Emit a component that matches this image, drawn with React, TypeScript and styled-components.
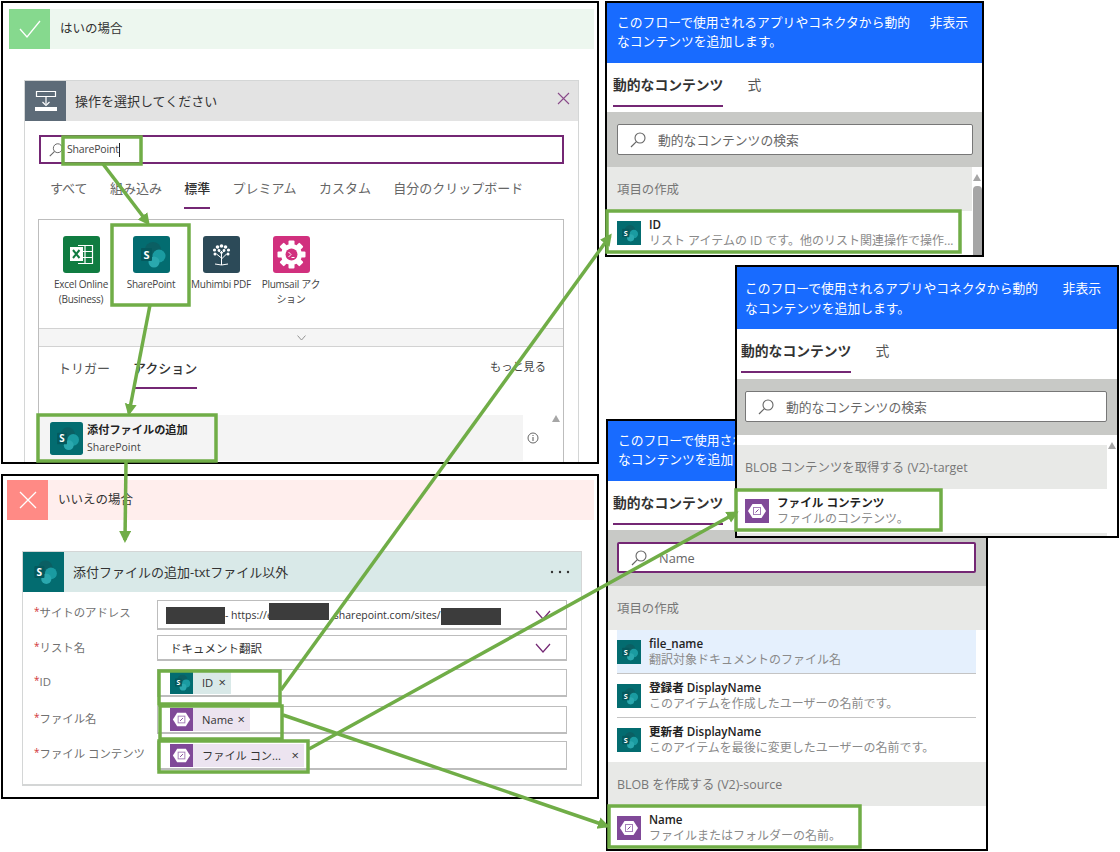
import React from "react";
import styled, { createGlobalStyle } from "styled-components";

const Global = createGlobalStyle`
  html, body { margin: 0; padding: 0; background: #fff; }
  body { font-family: "Open Sans", "Noto Sans CJK JP", sans-serif; color: #333; }
  * { box-sizing: border-box; }
`;

const Canvas = styled.main`
  position: relative;
  width: 1120px;
  height: 852px;
  overflow: hidden;
  background: #fff;
`;

/* ---------- free-canvas windows ---------- */
const FlowWindow = styled.section<{ $top: number; $height: number; $pad: number }>`
  position: absolute;
  left: 1px;
  top: ${(p) => p.$top}px;
  width: 598px;
  height: ${(p) => p.$height}px;
  border: 2px solid #000;
  background: #fff;
  overflow: hidden;
  padding: ${(p) => p.$pad}px 3px 0 ${(p) => p.$pad}px;
`;

const Band = styled.div<{ $bg: string }>`
  display: flex;
  align-items: center;
  height: 40px;
  background: ${(p) => p.$bg};
  font-size: 12.5px;
  color: #333;
`;

const BandIcon = styled.div<{ $bg: string }>`
  width: 41px;
  height: 40px;
  background: ${(p) => p.$bg};
  margin-right: 10px;
  display: flex;
  align-items: center;
  justify-content: center;
`;

const BandLabel = styled.span`
  padding-bottom: 3px;
`;

const Card = styled.div<{ $left: number; $top: number; $width: number; $height: number }>`
  margin: ${(p) => p.$top}px 0 0 ${(p) => p.$left}px;
  width: ${(p) => p.$width}px;
  height: ${(p) => p.$height}px;
  border: 1px solid #d4d6d6;
  border-bottom-width: 2px;
  background: #fff;
`;

const CardHead = styled.div<{ $bg: string }>`
  display: flex;
  align-items: center;
  height: 40px;
  background: ${(p) => p.$bg};
  font-size: 13px;
  color: #333;
  padding-right: 8px;
`;

const CardHeadIcon = styled.div<{ $bg: string }>`
  width: 41px;
  height: 40px;
  background: ${(p) => p.$bg};
  display: flex;
  align-items: center;
  justify-content: center;
  margin-right: 9px;
`;

const CardTitle = styled.span`
  flex: 1;
  padding-bottom: 2px;
`;

const OpSearch = styled.div`
  display: flex;
  align-items: center;
  gap: 3px;
  margin: 14px 0 0 14px;
  width: 525px;
  height: 29px;
  padding-left: 7px;
  border: 2px solid #742774;
  font-size: 10.5px;
  letter-spacing: -0.2px;
  color: #444;
`;

const Caret = styled.span`
  display: inline-block;
  width: 1px;
  height: 14px;
  background: #222;
  vertical-align: middle;
`;

const TabRow = styled.div`
  display: flex;
  gap: 22.3px;
  height: 55px;
  padding: 14px 0 0 25px;
`;

const OpTab = styled.div<{ $active?: boolean }>`
  height: 31px;
  font-size: 13px;
  line-height: 20px;
  color: ${(p) => (p.$active ? "#333" : "#666")};
  font-weight: ${(p) => (p.$active ? 500 : 400)};
  border-bottom: ${(p) => (p.$active ? "2px solid #742774" : "none")};
`;

const OpBox = styled.div`
  margin-left: 13px;
  width: 526px;
  height: 260px;
  border: 1px solid #bdbdbd;
`;

const Tiles = styled.div`
  display: flex;
  height: 108px;
  padding: 16px 0 0 7px;
`;

const Tile = styled.div`
  width: 70px;
  display: flex;
  flex-direction: column;
  align-items: center;
  font-size: 10px;
  line-height: 15px;
  color: #444;
  text-align: center;
`;

const TileLabel = styled.div`
  margin-top: 4px;
  width: 70px;
  white-space: pre-line;
  letter-spacing: -0.25px;
`;

const CollapseRow = styled.div`
  height: 19px;
  background: #f5f5f5;
  border-top: 1px solid #d2d2d2;
  border-bottom: 1px solid #d2d2d2;
  display: flex;
  align-items: center;
  justify-content: center;
`;

const ActionTabs = styled.div`
  display: flex;
  gap: 23px;
  height: 68px;
  padding: 11px 17px 0 19px;
`;

const ActionTab = styled.div<{ $active?: boolean }>`
  height: 31px;
  font-size: 13px;
  line-height: 20px;
  color: ${(p) => (p.$active ? "#333" : "#555")};
  font-weight: ${(p) => (p.$active ? 500 : 400)};
  border-bottom: ${(p) => (p.$active ? "2px solid #742774" : "none")};
`;

const MoreLink = styled.div`
  margin-left: auto;
  font-size: 11.2px;
  line-height: 18px;
  color: #444;
`;

const ActionBody = styled.div`
  display: flex;
`;

const ActionRow = styled.div`
  display: flex;
  flex: none;
  align-items: center;
  gap: 4px;
  width: 484px;
  height: 46px;
  padding-left: 11px;
  background: #f4f4f4;
`;

const ActionText = styled.div`
  display: flex;
  flex-direction: column;
  gap: 1px;
`;

const ActionTitle = styled.div`
  font-size: 11.2px;
  line-height: 16px;
  font-weight: 700;
  color: #222;
`;

const ActionSub = styled.div`
  font-size: 10.5px;
  line-height: 16px;
  color: #444;
`;

const InfoSlot = styled.div`
  width: 20px;
  display: flex;
  align-items: center;
  justify-content: center;
`;

const ScrollUp = styled.div<{ $ml: number; $mt: number }>`
  flex: none;
  width: 0;
  height: 0;
  margin: ${(p) => p.$mt}px 0 0 ${(p) => p.$ml}px;
  border-left: 4px solid transparent;
  border-right: 4px solid transparent;
  border-bottom: 7px solid #a6a6a6;
`;

/* ---------- form ---------- */
const Form = styled.div`
  padding: 8px 14px 0 11px;
`;

const Field = styled.div<{ $gap: number }>`
  display: flex;
  margin-bottom: ${(p) => p.$gap}px;
`;

const FieldLabel = styled.div`
  width: 123px;
  font-size: 11.4px;
  line-height: 18px;
  padding-top: 2px;
  color: #707070;
  white-space: nowrap;
`;

const Star = styled.span`
  color: #d13438;
  font-size: 10px;
  vertical-align: 2px;
`;

const FieldInput = styled.div<{ $height: number }>`
  flex: 1;
  height: ${(p) => p.$height}px;
  border: 1px solid #bdbdbd;
  border-bottom-width: 2px;
  display: flex;
  align-items: center;
  position: relative;
  font-size: 11.5px;
  color: #333;
  padding-left: 12px;
`;

const Chevron = styled.span`
  position: absolute;
  right: 15px;
  top: 50%;
  transform: translateY(-50%);
  display: flex;
`;

const UrlText = styled.span`
  font-size: 10.5px;
  white-space: nowrap;
  display: flex;
  align-items: center;
  margin-left: -4px;
`;

const Redact = styled.span<{ $w: number; $shift: number; $gapL?: number; $gapR?: number }>`
  display: inline-block;
  width: ${(p) => p.$w}px;
  height: 17px;
  background: #3c3c3c;
  transform: translateY(${(p) => p.$shift}px);
  margin-left: ${(p) => p.$gapL || 0}px;
  margin-right: ${(p) => p.$gapR || 0}px;
`;

const Chip = styled.div<{ $bg: string; $w: number }>`
  display: flex;
  align-items: center;
  width: ${(p) => p.$w}px;
  height: 23px;
  background: ${(p) => p.$bg};
  font-size: 11.2px;
  color: #333;
  white-space: nowrap;
`;

const ChipText = styled.span`
  margin-left: 9px;
  flex: 1;
`;

const ChipClose = styled.span`
  font-size: 13px;
  line-height: 1;
  margin-right: 5px;
  color: #333;
`;

/* ---------- dynamic content panels ---------- */
const Panel = styled.section<{ $left: number; $top: number; $w: number; $h: number; $z: number }>`
  position: absolute;
  left: ${(p) => p.$left}px;
  top: ${(p) => p.$top}px;
  width: ${(p) => p.$w}px;
  height: ${(p) => p.$h}px;
  z-index: ${(p) => p.$z};
  border: 2px solid #000;
  background: #fff;
  overflow: hidden;
`;

const PanelHead = styled.header<{ $wide?: boolean }>`
  display: flex;
  justify-content: space-between;
  height: ${(p) => (p.$wide ? 62 : 60)}px;
  padding: ${(p) => (p.$wide ? "11px 16px 0 8px" : "10px 14px 0 10px")};
  background: #186bff;
  color: #fff;
  font-size: 12.8px;
  line-height: ${(p) => (p.$wide ? 20 : 19)}px;
`;

const PanelHeadText = styled.div`
  width: 300px;
  flex: none;
`;

const PanelTabs = styled.div<{ $left: number; $h?: number }>`
  display: flex;
  gap: 24px;
  height: ${(p) => p.$h ?? 49}px;
  padding: 11px 0 0 ${(p) => p.$left}px;
`;

const PanelTab = styled.div<{ $active?: boolean }>`
  height: 33px;
  font-size: 13.8px;
  line-height: 22px;
  font-weight: ${(p) => (p.$active ? 600 : 400)};
  color: ${(p) => (p.$active ? "#333" : "#555")};
  border-bottom: ${(p) => (p.$active ? "2px solid #742774" : "none")};
`;

const SearchBand = styled.div<{ $left: number; $right: number; $h?: number }>`
  height: ${(p) => p.$h ?? 55}px;
  background: #c8c9c6;
  padding: 12px ${(p) => p.$right}px 12px ${(p) => p.$left}px;
`;

const ContentSearch = styled.div<{ $focus?: boolean }>`
  display: flex;
  align-items: center;
  gap: 11px;
  height: 31px;
  padding-left: 11px;
  background: #fff;
  border: ${(p) => (p.$focus ? "2px solid #742774" : "1px solid #777")};
  border-radius: 2px;
  font-size: 12.8px;
  color: #666;
`;

const ListBody = styled.div`
  display: flex;
`;

const ListMain = styled.div`
  flex: 1;
  min-width: 0;
`;

const ScrollCol = styled.div`
  width: 10px;
  display: flex;
  flex-direction: column;
  align-items: center;
`;

const ScrollThumb = styled.div`
  width: 9px;
  height: 70px;
  margin-top: 5px;
  background: #a6a6a6;
  border-radius: 4px 4px 0 0;
`;

const Section = styled.div<{ $mt?: number; $left?: number }>`
  display: flex;
  align-items: center;
  height: 44px;
  margin-top: ${(p) => p.$mt || 0}px;
  padding-left: ${(p) => p.$left ?? 10}px;
  background: #e8e9e7;
  font-size: 12.4px;
  color: #777;
`;

const Item = styled.div<{ $hi?: boolean; $line?: boolean; $left?: number }>`
  display: flex;
  align-items: center;
  gap: 8px;
  height: 44px;
  margin-left: ${(p) => p.$left ?? 10}px;
  margin-right: 10px;
  background: ${(p) => (p.$hi ? "#e5f0fd" : "#fff")};
  border-bottom: ${(p) => (p.$line ? "1px solid #c4c4c4" : "none")};
  white-space: nowrap;
  overflow: hidden;
`;

const ItemText = styled.div`
  min-width: 0;
  flex: 1;
`;

const ItemTitle = styled.div`
  font-size: 11.6px;
  line-height: 15px;
  font-weight: 600;
  color: #222;
`;

const ItemDesc = styled.div`
  font-size: 12px;
  line-height: 17px;
  color: #8a8a8a;
`;

const Overlay = styled.svg`
  position: absolute;
  inset: 0;
  z-index: 20;
  pointer-events: none;
`;

/* ---------- icons ---------- */
const SharePointIcon = ({ size = 37, square }: { size?: number; square?: boolean }) => (
  <svg width={size} height={size} viewBox="0 0 37 37" style={{ flex: "none" }}>
    <rect width="37" height="37" rx={square ? 0 : 3} fill="#036c70" />
    <circle cx="20" cy="14" r="8" fill="#0b5f63" />
    <circle cx="26" cy="20" r="6.5" fill="#1a9ba1" />
    <circle cx="21" cy="26" r="5.5" fill="#2aa8ae" />
    <rect x="8" y="12" width="11" height="13" rx="1" fill="#05595d" />
    <text x="13.5" y="22.5" fontSize="11" fontWeight="700" fill="#fff" textAnchor="middle" fontFamily="Open Sans, sans-serif">S</text>
  </svg>
);

const ExcelIcon = () => (
  <svg width="37" height="37" viewBox="0 0 37 37" style={{ flex: "none" }}>
    <rect width="37" height="37" rx="3" fill="#107c41" />
    <path d="M15 9.5h14.5v18H15M22 9.5v18M15 15.5h14.5M15 21.5h14.5" fill="none" stroke="#fff" strokeWidth="1.2" />
    <rect x="7" y="11" width="13" height="14" fill="#fff" />
    <path d="M10 14l6.5 8M16.5 14L10 22" stroke="#107c41" strokeWidth="2" />
  </svg>
);

const MuhimbiIcon = () => (
  <svg width="37" height="37" viewBox="0 0 37 37" style={{ flex: "none" }}>
    <rect width="37" height="37" rx="3" fill="#2c4a58" />
    <g fill="none" stroke="#fff" strokeWidth="1">
      <path d="M18.5 29V15M18.5 22l-5-4M18.5 23l5-5M18.5 18l-3-4M18.5 18l3-4M12 28q6.500 2 13 0" />
    </g>
    <g fill="#fff">
      <circle cx="18.500" cy="10" r="1.800" /><circle cx="14.500" cy="11" r="1.800" /><circle cx="22.500" cy="11" r="1.800" />
      <circle cx="11.500" cy="14" r="1.600" /><circle cx="25.500" cy="14" r="1.600" /><circle cx="12" cy="18" r="1.500" />
      <circle cx="25" cy="18" r="1.500" /><circle cx="16" cy="14.500" r="1.400" /><circle cx="21" cy="14.500" r="1.400" />
    </g>
  </svg>
);

const PlumsailIcon = () => (
  <svg width="37" height="37" viewBox="0 0 37 37" style={{ flex: "none" }}>
    <rect width="37" height="37" rx="3" fill="#d1307e" />
    <g fill="#fff">
      {[0, 45, 90, 135, 180, 225, 270, 315].map((a) => (
        <rect key={a} x="15.500" y="4.500" width="6" height="7" rx="1" transform={`rotate(${a} 18.500 18.500)`} />
      ))}
      <circle cx="18.500" cy="18.500" r="10.500" />
    </g>
    <circle cx="18.500" cy="18.500" r="6" fill="#d1307e" />
    <path d="M15.500 16l2.500 2.500-2.500 2.500M18.500 21.500h3" fill="none" stroke="#fff" strokeWidth="1" />
  </svg>
);

const BlobIcon = ({ size = 24 }: { size?: number }) => (
  <svg width={size} height={size} viewBox="0 0 24 24" style={{ flex: "none" }}>
    <rect width="24" height="24" fill="#804998" />
    <path d="M7.500 5h9l4.500 7-4.500 7h-9L3 12z" fill="#fff" />
    <rect x="8.500" y="8.500" width="7" height="7" fill="#fff" stroke="#a47fb8" strokeWidth="1" />
    <path d="M10.500 13.500l3-3" stroke="#804998" strokeWidth="1" />
  </svg>
);

const SearchGlyph = ({ size = 18, color = "#666" }: { size?: number; color?: string }) => (
  <svg width={size} height={size} viewBox="0 0 18 18" style={{ flex: "none" }}>
    <circle cx="11" cy="7" r="5" fill="none" stroke={color} strokeWidth="1.100" />
    <path d="M7.400 10.600L2 16" stroke={color} strokeWidth="1.200" />
  </svg>
);

const ChevronGlyph = ({ size = 16, color = "#742774", w = 1.200 }: { size?: number; color?: string; w?: number }) => (
  <svg width={size} height={size * 0.625} viewBox="0 0 16 10">
    <path d="M1 1l7 8 7-8" fill="none" stroke={color} strokeWidth={w} />
  </svg>
);

const GREEN = "#70ad47";

const Box = ({ x, y, w, h }: { x: number; y: number; w: number; h: number }) => (
  <rect x={x} y={y} width={w} height={h} fill="none" stroke={GREEN} strokeWidth="3.500" />
);

const Arrow = ({ d }: { d: [number, number, number, number] }) => (
  <line x1={d[0]} y1={d[1]} x2={d[2]} y2={d[3]} stroke={GREEN} strokeWidth="3.500" markerEnd="url(#head)" />
);

const PanelHeader = ({ wide }: { wide?: boolean }) => (
  <PanelHead $wide={wide}>
    <PanelHeadText>このフローで使用されるアプリやコネクタから動的なコンテンツを追加します。</PanelHeadText>
    <span>非表示</span>
  </PanelHead>
);

const App = () => (
  <Canvas>
    <Global />

    <FlowWindow $top={1} $height={463} $pad={6}>
      <Band $bg="#edf7ef">
        <BandIcon $bg="#86d98e">
          <svg width="24" height="20" viewBox="0 0 24 20">
            <path d="M2 10l7 8L22 2" fill="none" stroke="#fff" strokeWidth="1.300" />
          </svg>
        </BandIcon>
        <BandLabel>はいの場合</BandLabel>
      </Band>
      <Card $left={15} $top={31} $width={555} $height={400}>
        <CardHead $bg="#e3e3e3">
          <CardHeadIcon $bg="#5d6b78">
            <svg width="24" height="24" viewBox="0 0 24 24">
              <path d="M2.500 2.500h19v5h-19zM12 7.500V15" fill="none" stroke="#fff" strokeWidth="1.200" />
              <path d="M8.500 13l3.500 3.500 3.500-3.500" fill="none" stroke="#fff" strokeWidth="1.200" />
              <rect x="1" y="18" width="22" height="4" fill="#fff" />
            </svg>
          </CardHeadIcon>
          <CardTitle>操作を選択してください</CardTitle>
          <svg width="13" height="13" viewBox="0 0 13 13" style={{ marginBottom: 6 }}>
            <path d="M1 1l11 11M12 1L1 12" stroke="#8a4a8a" strokeWidth="1.100" />
          </svg>
        </CardHead>
        <OpSearch>
          <SearchGlyph size={16} />
          <span>SharePoint<Caret /></span>
        </OpSearch>
        <TabRow>
          <OpTab>すべて</OpTab>
          <OpTab>組み込み</OpTab>
          <OpTab $active>標準</OpTab>
          <OpTab>プレミアム</OpTab>
          <OpTab>カスタム</OpTab>
          <OpTab>自分のクリップボード</OpTab>
        </TabRow>
        <OpBox>
          <Tiles>
            <Tile><ExcelIcon /><TileLabel>{"Excel Online\n(Business)"}</TileLabel></Tile>
            <Tile><SharePointIcon /><TileLabel>SharePoint</TileLabel></Tile>
            <Tile><MuhimbiIcon /><TileLabel>Muhimbi PDF</TileLabel></Tile>
            <Tile><PlumsailIcon /><TileLabel>{"Plumsail アク\nション"}</TileLabel></Tile>
          </Tiles>
          <CollapseRow><ChevronGlyph size={9} color="#888" w={1.600} /></CollapseRow>
          <ActionTabs>
            <ActionTab>トリガー</ActionTab>
            <ActionTab $active>アクション</ActionTab>
            <MoreLink>もっと見る</MoreLink>
          </ActionTabs>
          <ActionBody>
            <ActionRow>
              <SharePointIcon size={33} />
              <ActionText>
                <ActionTitle>添付ファイルの追加</ActionTitle>
                <ActionSub>SharePoint</ActionSub>
              </ActionText>
            </ActionRow>
            <InfoSlot>
              <svg width="12" height="12" viewBox="0 0 12 12">
                <circle cx="6" cy="6" r="5" fill="none" stroke="#555" strokeWidth="0.900" />
                <path d="M6 5v4M6 3v1" stroke="#555" strokeWidth="1" />
              </svg>
            </InfoSlot>
            <ScrollUp $ml={9} $mt={0} />
          </ActionBody>
        </OpBox>
      </Card>
    </FlowWindow>

    <FlowWindow $top={474} $height={325} $pad={4}>
      <Band $bg="#ffeeed">
        <BandIcon $bg="#ff8a85">
          <svg width="18" height="18" viewBox="0 0 18 18">
            <path d="M1 1l16 16M17 1L1 17" stroke="#fff" strokeWidth="1.300" />
          </svg>
        </BandIcon>
        <BandLabel>いいえの場合</BandLabel>
      </Band>
      <Card $left={15} $top={31} $width={560} $height={235}>
        <CardHead $bg="#d9e9e8">
          <CardHeadIcon $bg="#036c70"><SharePointIcon size={34} square /></CardHeadIcon>
          <CardTitle>添付ファイルの追加-txtファイル以外</CardTitle>
          <svg width="20" height="4" viewBox="0 0 20 4" style={{ marginRight: 3 }}>
            <circle cx="2" cy="2" r="1.200" fill="#333" /><circle cx="10" cy="2" r="1.200" fill="#333" /><circle cx="18" cy="2" r="1.200" fill="#333" />
          </svg>
        </CardHead>
        <Form>
          <Field $gap={5}>
            <FieldLabel><Star>*</Star>サイトのアドレス</FieldLabel>
            <FieldInput $height={30}>
              <UrlText>
                <Redact $w={59} $shift={1} />
                - https://e
                <Redact $w={60} $shift={-3} $gapL={-4} $gapR={5} />
                sharepoint.com/sites/
                <Redact $w={60} $shift={2} />
              </UrlText>
              <Chevron><ChevronGlyph /></Chevron>
            </FieldInput>
          </Field>
          <Field $gap={8}>
            <FieldLabel><Star>*</Star>リスト名</FieldLabel>
            <FieldInput $height={26}>
              ドキュメント翻訳
              <Chevron><ChevronGlyph /></Chevron>
            </FieldInput>
          </Field>
          <Field $gap={9}>
            <FieldLabel><Star>*</Star>ID</FieldLabel>
            <FieldInput $height={28}>
              <Chip $bg="#d9e9e8" $w={61}>
                <SharePointIcon size={23} square />
                <ChipText>ID</ChipText>
                <ChipClose>×</ChipClose>
              </Chip>
            </FieldInput>
          </Field>
          <Field $gap={7}>
            <FieldLabel><Star>*</Star>ファイル名</FieldLabel>
            <FieldInput $height={28}>
              <Chip $bg="#ece4f0" $w={80}>
                <BlobIcon size={23} />
                <ChipText>Name</ChipText>
                <ChipClose>×</ChipClose>
              </Chip>
            </FieldInput>
          </Field>
          <Field $gap={0}>
            <FieldLabel><Star>*</Star>ファイル コンテンツ</FieldLabel>
            <FieldInput $height={29}>
              <Chip $bg="#ece4f0" $w={134}>
                <BlobIcon size={23} />
                <ChipText>ファイル コン...</ChipText>
                <ChipClose>×</ChipClose>
              </Chip>
            </FieldInput>
          </Field>
        </Form>
      </Card>
    </FlowWindow>

    <Panel $left={605} $top={1} $w={379} $h={256} $z={1}>
      <PanelHeader />
      <PanelTabs $left={6}>
        <PanelTab $active>動的なコンテンツ</PanelTab>
        <PanelTab>式</PanelTab>
      </PanelTabs>
      <SearchBand $left={10} $right={9}>
        <ContentSearch><SearchGlyph />動的なコンテンツの検索</ContentSearch>
      </SearchBand>
      <ListBody>
        <ListMain>
          <Section>項目の作成</Section>
          <Item>
            <SharePointIcon size={24} square />
            <ItemText>
              <ItemTitle>ID</ItemTitle>
              <ItemDesc>リスト アイテムの ID です。他のリスト関連操作で操作...</ItemDesc>
            </ItemText>
          </Item>
        </ListMain>
        <ScrollCol>
          <ScrollUp $ml={0} $mt={7} />
          <ScrollThumb />
        </ScrollCol>
      </ListBody>
    </Panel>

    <Panel $left={606} $top={419} $w={382} $h={432} $z={1}>
      <PanelHeader />
      <PanelTabs $left={5}>
        <PanelTab $active>動的なコンテンツ</PanelTab>
        <PanelTab>式</PanelTab>
      </PanelTabs>
      <SearchBand $left={9} $right={10} $h={56}>
        <ContentSearch $focus><SearchGlyph />Name</ContentSearch>
      </SearchBand>
      <Section $left={9}>項目の作成</Section>
      <Item $hi $line $left={9}>
        <SharePointIcon size={24} square />
        <ItemText>
          <ItemTitle>file_name</ItemTitle>
          <ItemDesc>翻訳対象ドキュメントのファイル名</ItemDesc>
        </ItemText>
      </Item>
      <Item $line $left={9}>
        <SharePointIcon size={24} square />
        <ItemText>
          <ItemTitle>登録者 DisplayName</ItemTitle>
          <ItemDesc>このアイテムを作成したユーザーの名前です。</ItemDesc>
        </ItemText>
      </Item>
      <Item $left={9}>
        <SharePointIcon size={24} square />
        <ItemText>
          <ItemTitle>更新者 DisplayName</ItemTitle>
          <ItemDesc>このアイテムを最後に変更したユーザーの名前です。</ItemDesc>
        </ItemText>
      </Item>
      <Section $left={9}>BLOB を作成する (V2)-source</Section>
      <Item $left={9}>
        <BlobIcon />
        <ItemText>
          <ItemTitle>Name</ItemTitle>
          <ItemDesc>ファイルまたはフォルダーの名前。</ItemDesc>
        </ItemText>
      </Item>
    </Panel>

    <Panel $left={735} $top={265} $w={384} $h={273} $z={2}>
      <PanelHeader wide />
      <PanelTabs $left={4} $h={50}>
        <PanelTab $active>動的なコンテンツ</PanelTab>
        <PanelTab>式</PanelTab>
      </PanelTabs>
      <SearchBand $left={8} $right={10} $h={56}>
        <ContentSearch><SearchGlyph />動的なコンテンツの検索</ContentSearch>
      </SearchBand>
      <ListBody>
        <ListMain>
          <Section $mt={10} $left={8}>BLOB コンテンツを取得する (V2)-target</Section>
          <Item $left={8}>
            <BlobIcon />
            <ItemText>
              <ItemTitle>ファイル コンテンツ</ItemTitle>
              <ItemDesc>ファイルのコンテンツ。</ItemDesc>
            </ItemText>
          </Item>
          <Section />
        </ListMain>
        <ScrollCol>
          <ScrollUp $ml={0} $mt={7} />
        </ScrollCol>
      </ListBody>
    </Panel>

    <Overlay width="1120" height="852" viewBox="0 0 1120 852">
      <defs>
        <marker id="head" markerUnits="userSpaceOnUse" markerWidth="13" markerHeight="13" refX="9" refY="6" orient="auto">
          <path d="M0 0L12 6L0 12z" fill={GREEN} />
        </marker>
      </defs>
      <Box x={63} y={137} w={78} h={27} />
      <Box x={112} y={225} w={77} h={80} />
      <Box x={38} y={415} w={178} h={46} />
      <Box x={159} y={671} w={121} h={33} />
      <Box x={160} y={706} w={122} h={33} />
      <Box x={159} y={741} w={149} h={31} />
      <Box x={607} y={211} w={353} h={41} />
      <Box x={736} y={490} w={205} h={40} />
      <Box x={609} y={806} w={251} h={41} />
      <Arrow d={[103, 164, 148, 223]} />
      <Arrow d={[150, 305, 129, 413]} />
      <Arrow d={[126, 462, 125, 540]} />
      <Arrow d={[281, 690, 610, 236]} />
      <Arrow d={[283, 715, 607, 826]} />
      <Arrow d={[309, 749, 736, 513]} />
    </Overlay>
  </Canvas>
);

export default App;
